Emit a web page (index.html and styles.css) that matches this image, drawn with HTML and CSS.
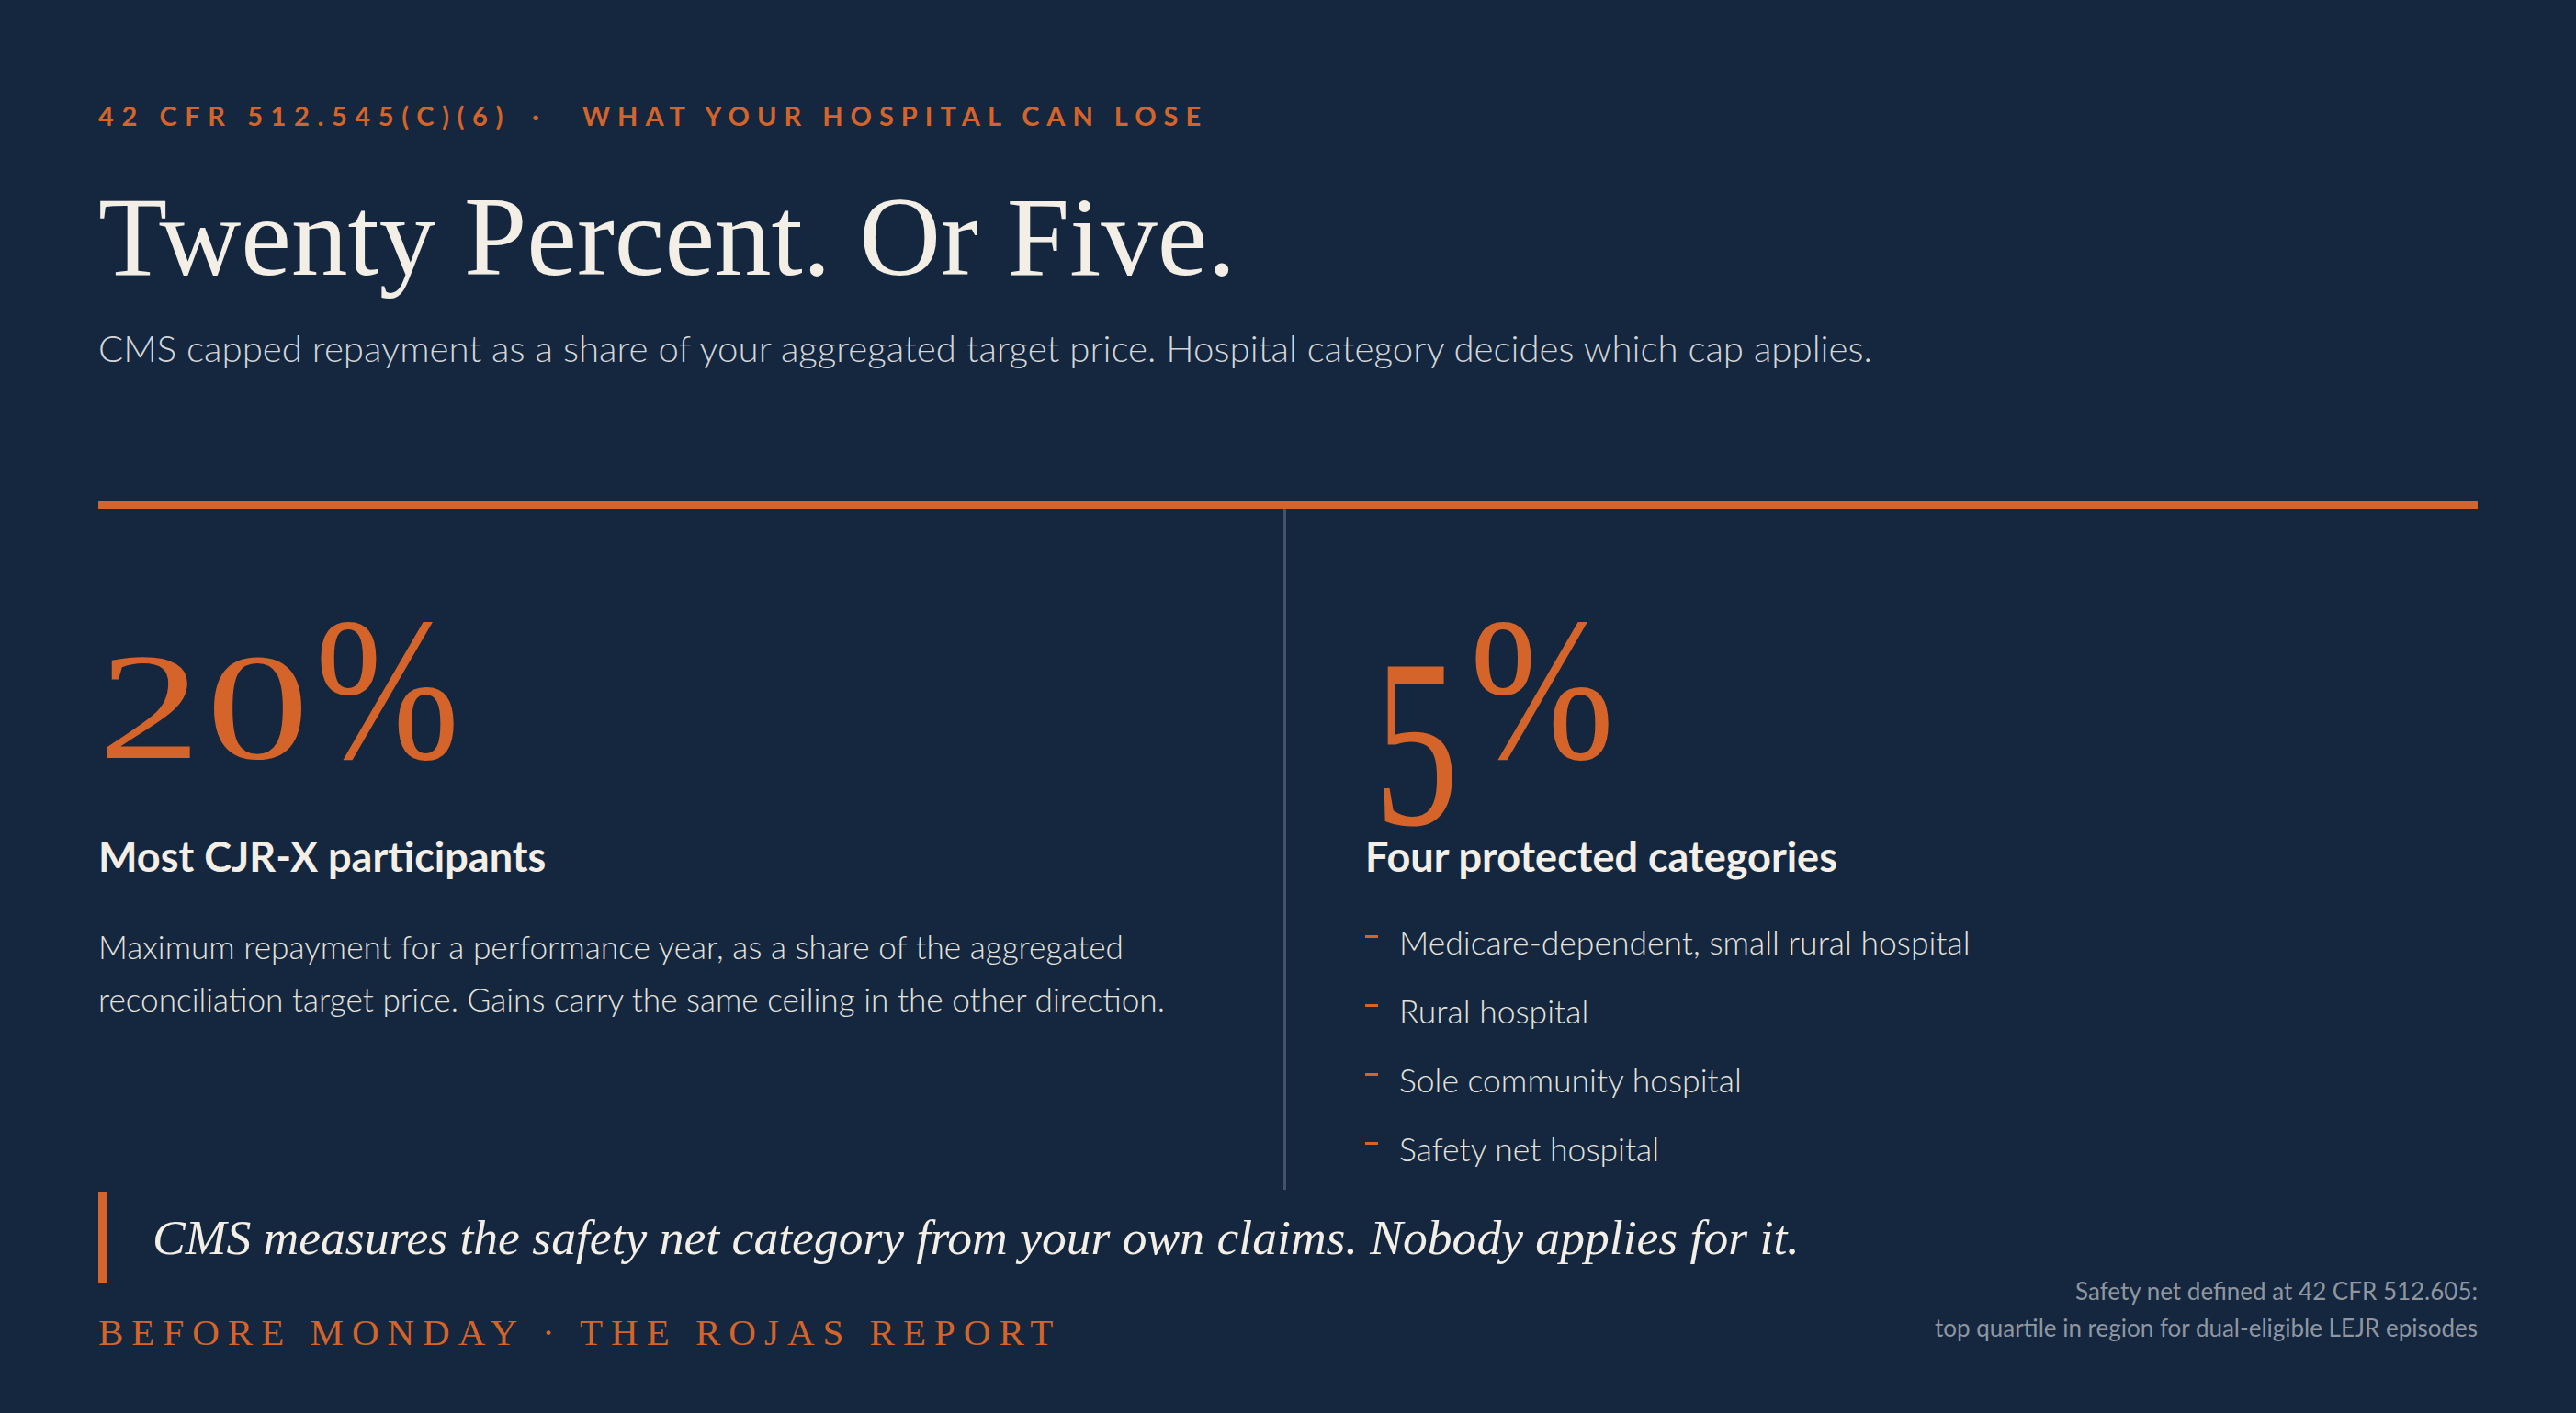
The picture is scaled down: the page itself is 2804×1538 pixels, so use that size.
FILE: index.html
```html
<!DOCTYPE html>
<html lang="en">
<head>
<meta charset="utf-8">
<title>Twenty Percent. Or Five.</title>
<link rel="stylesheet" href="styles.css">
</head>
<body>
<div class="page">
  <header class="head">
    <p class="eyebrow"><span>42 CFR 512.545(C)(6)</span><span class="sep">·</span><span class="eyebrow-topic">What your hospital can lose</span></p>
    <h1 class="title">Twenty Percent. Or Five.</h1>
    <p class="dek">CMS capped repayment as a share of your aggregated target price. Hospital category decides which cap applies.</p>
  </header>

  <section class="caps">
    <div class="cap cap-left">
      <div class="big"><span class="fig fig-wide">20</span><span class="pct">%</span></div>
      <h2 class="cap-title">Most CJR-X participants</h2>
      <p class="cap-text">Maximum repayment for a performance year, as a share of the aggregated reconciliation target price. Gains carry the same ceiling in the other direction.</p>
    </div>
    <div class="cap cap-right">
      <div class="big"><span class="fig fig-five">5</span><span class="pct">%</span></div>
      <h2 class="cap-title">Four protected categories</h2>
      <ul class="cats">
        <li>Medicare-dependent, small rural hospital</li>
        <li>Rural hospital</li>
        <li>Sole community hospital</li>
        <li>Safety net hospital</li>
      </ul>
    </div>
  </section>

  <footer class="bottom">
    <div class="bottom-main">
      <blockquote class="pull">CMS measures the safety net category from your own claims. Nobody applies for it.</blockquote>
      <p class="brand">Before Monday · The Rojas Report</p>
    </div>
    <p class="note">Safety net defined at 42 CFR 512.605:<br>top quartile in region for dual-eligible LEJR episodes</p>
  </footer>
</div>
</body>
</html>
```

FILE: styles.css
```css
* { box-sizing: border-box; }

html, body {
  margin: 0;
  padding: 0;
  background: #14273f;
}

body {
  width: 2804px;
  height: 1538px;
  overflow: hidden;
  font-family: Lato, "Liberation Sans", sans-serif;
  color: #f2eee5;
}

.page {
  padding: 108px 107px 0;
}

.eyebrow {
  margin: 0;
  font-family: Lato, "Liberation Sans", sans-serif;
  font-weight: 700;
  font-size: 29px;
  line-height: 36px;
  letter-spacing: 8.6px;
  text-transform: uppercase;
  color: #d4642a;
  white-space: nowrap;
}

.eyebrow .sep {
  margin: 0 38px 0 23px;
}

.eyebrow-topic {
  letter-spacing: 8px;
}

.title {
  margin: 44px 0 0;
  font-family: "Liberation Serif", serif;
  font-weight: 400;
  font-size: 123px;
  line-height: 140px;
  color: #f3efe6;
  white-space: nowrap;
}

.dek {
  margin: 26px 0 0;
  font-weight: 300;
  font-size: 40.2px;
  line-height: 50px;
  color: #d3d5d8;
  white-space: nowrap;
}

.caps {
  margin-top: 141px;
  display: grid;
  grid-template-columns: 1290px 1fr;
  border-top: 9px solid #d4642a;
}

.cap {
  padding-top: 85px;
}

.cap-right {
  border-left: 3px solid rgba(255, 255, 255, 0.2);
  padding-left: 86px;
  padding-bottom: 16px;
}

.big {
  height: 230px;
  font-family: "Liberation Serif", serif;
  font-size: 210px;
  line-height: 230px;
  color: #d4642a;
  white-space: nowrap;
}

.fig,
.pct {
  display: inline-block;
  line-height: 1;
  transform-origin: 0 50%;
}

.fig-wide {
  font-size: 166px;
  letter-spacing: 4px;
  transform: scaleX(1.35);
  margin-right: 62px;
}

.fig-five {
  font-size: 262px;
  line-height: 0.6;
  transform: scaleX(0.7);
  vertical-align: -72px;
  margin-left: 10px;
  margin-right: -27px;
}

.pct {
  font-size: 222px;
  transform: scaleX(0.85);
}

.cap-title {
  margin: 37px 0 0;
  font-weight: 700;
  font-size: 45px;
  line-height: 52px;
  color: #f3efe6;
  white-space: nowrap;
}

.cap-text {
  margin: 44px 0 0;
  max-width: 1240px;
  font-weight: 300;
  font-size: 35.2px;
  line-height: 57px;
  color: #e4e2dc;
}

.cats {
  margin: 39px 0 0;
  padding: 0;
  list-style: none;
}

.cats li {
  position: relative;
  padding-left: 37px;
  margin-bottom: 18px;
  font-weight: 300;
  font-size: 35.5px;
  line-height: 57px;
  color: #e4e2dc;
  white-space: nowrap;
}

.cats li:last-child {
  margin-bottom: 0;
}

.cats li::before {
  content: "";
  position: absolute;
  left: 0;
  top: 21px;
  width: 14px;
  height: 3px;
  background: #d4642a;
}

.bottom {
  display: flex;
  justify-content: space-between;
  align-items: flex-end;
}

.pull {
  margin: 2px 0 0;
  height: 100px;
  border-left: 9px solid #d4642a;
  padding-left: 50px;
  font-family: "Liberation Serif", serif;
  font-style: italic;
  font-size: 53.6px;
  line-height: 100px;
  color: #f3efe6;
  white-space: nowrap;
}

.brand {
  margin: 30px 0 0;
  font-family: "Liberation Serif", serif;
  font-size: 41px;
  line-height: 46px;
  letter-spacing: 9px;
  text-transform: uppercase;
  color: #d4642a;
  white-space: nowrap;
}

.note {
  margin: 0 0 8px;
  text-align: right;
  font-size: 26px;
  line-height: 40px;
  color: #8f96a0;
  white-space: nowrap;
}
```
